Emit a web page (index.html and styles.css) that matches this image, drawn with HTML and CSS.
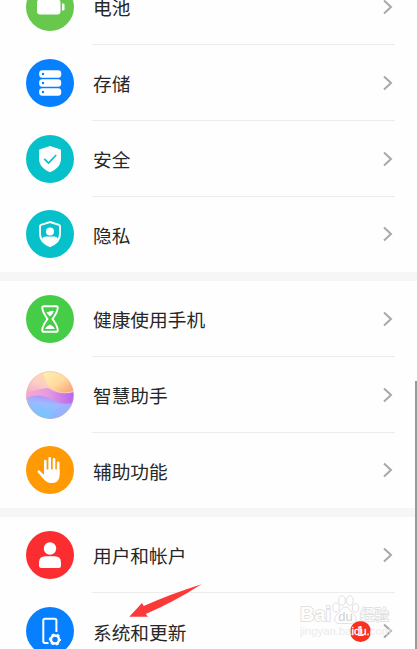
FILE: index.html
```
<!DOCTYPE html>
<html lang="zh-CN">

<head>
    <meta charset="UTF-8">
    <meta name="viewport" content="width=device-width, initial-scale=1.0">
    <title>设置</title>
    <link rel="stylesheet" href="styles.css">
</head>

<body>
    <div class="screen">
        <div class="settings">
            <div class="group">
                <div class="row">
                    <svg class="icon" viewBox="0 0 48 48">
                        <circle cx="24" cy="24" r="24" fill="#68c84e"/>
                        <rect x="11" y="16.5" width="23.5" height="15" rx="3" fill="#fff"/>
                        <path d="M36 20.5h1.2q1.3 0 1.3 1.3v4.4q0 1.3-1.3 1.3H36z" fill="#fff"/>
                    </svg>
                    <div class="content"><span class="label">电池</span><svg class="arrow" viewBox="0 0 10 16"><path d="M1 1.5 8 8 1 14.5"/></svg></div>
                </div>
                <div class="row">
                    <svg class="icon" viewBox="0 0 48 48">
                        <circle cx="24" cy="24" r="24" fill="#0680ff"/>
                        <g fill="#fff">
                            <rect x="13.2" y="11.2" width="22" height="7.6" rx="3"/>
                            <rect x="13.2" y="20.2" width="22" height="7.6" rx="3"/>
                            <rect x="13.2" y="29.2" width="22" height="7.6" rx="3"/>
                        </g>
                        <g fill="#0680ff">
                            <circle cx="17" cy="15" r="1.2"/>
                            <circle cx="17" cy="24" r="1.2"/>
                            <circle cx="17" cy="33" r="1.2"/>
                        </g>
                    </svg>
                    <div class="content"><span class="label">存储</span><svg class="arrow" viewBox="0 0 10 16"><path d="M1 1.5 8 8 1 14.5"/></svg></div>
                </div>
                <div class="row raised">
                    <svg class="icon" viewBox="0 0 48 48">
                        <circle cx="24" cy="24" r="24" fill="#06c1ca"/>
                        <path d="M24 11 34 14.2Q35 14.6 35 15.6V24C35 30.5 29.5 35 24 37.3 18.5 35 13 30.5 13 24V15.6Q13 14.6 14 14.2Z" fill="#fff"/>
                        <path d="m18.2 23.8 4.3 4.2 7.7-8" fill="none" stroke="#06c1ca" stroke-width="1.7"/>
                    </svg>
                    <div class="content"><span class="label">安全</span><svg class="arrow" viewBox="0 0 10 16"><path d="M1 1.5 8 8 1 14.5"/></svg></div>
                </div>
                <div class="row short">
                    <svg class="icon" viewBox="0 0 48 48">
                        <circle cx="24" cy="24" r="24" fill="#06c1ca"/>
                        <path d="M24 12 33 14.9Q34 15.3 34 16.2V24C34 30 29 34 24 36.2 19 34 14 30 14 24V16.2Q14 15.3 15 14.9Z" fill="none" stroke="#fff" stroke-width="2"/>
                        <circle cx="24" cy="21.5" r="4" fill="#fff"/>
                        <path d="M16.2 28.5Q17 26.5 20 26.5H28Q31 26.5 31.8 28.5 29.5 33.5 24 36 18.5 33.5 16.2 28.5Z" fill="#fff"/>
                    </svg>
                    <div class="content"><span class="label">隐私</span><svg class="arrow" viewBox="0 0 10 16"><path d="M1 1.5 8 8 1 14.5"/></svg></div>
                </div>
            </div>

            <div class="group">
                <div class="row">
                    <svg class="icon" viewBox="0 0 48 48">
                        <circle cx="24" cy="24" r="24" fill="#45cd47"/>
                        <path d="M18 11.2H30Q32 11.2 31.7 13.2C31.2 18 28.5 21 26.5 24 28.5 27 31.2 30 31.7 34.8Q32 36.8 30 36.8H18Q16 36.8 16.3 34.8C16.8 30 19.5 27 21.5 24 19.5 21 16.8 18 16.3 13.2Q16 11.2 18 11.2Z" fill="none" stroke="#fff" stroke-width="1.9"/>
                        <path d="M20 16.5q2 1.2 4-.3 2-1 4 0-1.2 2.8-4 5.3-2.8-2.3-4-5zM19.2 34q.8-2.5 4.8-4.5 4 2 4.8 4.5z" fill="#fff"/>
                    </svg>
                    <div class="content"><span class="label">健康使用手机</span><svg class="arrow" viewBox="0 0 10 16"><path d="M1 1.5 8 8 1 14.5"/></svg></div>
                </div>
                <div class="row">
                    <svg class="icon" viewBox="0 0 48 48">
                        <defs>
                            <clipPath id="ball"><circle cx="24" cy="24" r="23.7"/></clipPath>
                            <linearGradient id="pink" x1=".5" y1="0" x2=".3" y2=".6">
                                <stop offset="0" stop-color="#ffe3a6"/>
                                <stop offset=".5" stop-color="#fbcdc5"/>
                                <stop offset="1" stop-color="#f4a6c6"/>
                            </linearGradient>
                            <linearGradient id="sun" x1="0" y1="0" x2="1" y2="1">
                                <stop offset="0" stop-color="#fff0b5"/>
                                <stop offset=".5" stop-color="#ffdb9d"/>
                                <stop offset="1" stop-color="#fb9d70"/>
                            </linearGradient>
                            <linearGradient id="violet" x1="0" y1="0" x2="1" y2="0">
                                <stop offset="0" stop-color="#f5a9cf"/>
                                <stop offset=".45" stop-color="#e59bdd"/>
                                <stop offset="1" stop-color="#b565f2"/>
                            </linearGradient>
                            <linearGradient id="sea" x1=".7" y1="0" x2=".4" y2="1">
                                <stop offset="0" stop-color="#ba86fa"/>
                                <stop offset=".4" stop-color="#9cbaff"/>
                                <stop offset="1" stop-color="#69caff"/>
                            </linearGradient>
                        </defs>
                        <g clip-path="url(#ball)">
                            <path d="M0 0h48v48H0z" fill="url(#pink)"/>
                            <path d="M18 0Q18 12 25 17 34 24 48 20V0z" fill="url(#sun)"/>
                            <path d="M0 22Q12 18 22 17 34 25 48 21V36H0z" fill="url(#violet)"/>
                            <path d="M0 27Q12 22 23 27 35 35 48 32V48H0z" fill="url(#sea)"/>
                            <path d="M48 31Q31 34 22 48H48z" fill="#a4a6fa" opacity=".5"/>
                        </g>
                        <circle cx="24" cy="24" r="23.4" fill="none" stroke="#e5a5a4" stroke-opacity=".35"/>
                    </svg>
                    <div class="content"><span class="label">智慧助手</span><svg class="arrow" viewBox="0 0 10 16"><path d="M1 1.5 8 8 1 14.5"/></svg></div>
                </div>
                <div class="row short">
                    <svg class="icon" viewBox="0 0 48 48">
                        <circle cx="24" cy="24" r="24" fill="#ff9a05"/>
                        <g fill="none" stroke="#fff" stroke-width="2.6" stroke-linecap="round">
                            <path d="M19.3 27V15M23.7 26V12.3M28 26V13.3M32.2 28V16.7M12.8 25.7l6 6.3"/>
                        </g>
                        <path d="M18 23.5H33.5V29C33.5 34.5 30.5 37 26 37 21.5 37 19 35 16.5 31.5L15 29.5 18 28z" fill="#fff"/>
                    </svg>
                    <div class="content"><span class="label">辅助功能</span><svg class="arrow" viewBox="0 0 10 16"><path d="M1 1.5 8 8 1 14.5"/></svg></div>
                </div>
            </div>

            <div class="group">
                <div class="row">
                    <svg class="icon" viewBox="0 0 48 48">
                        <circle cx="24" cy="24" r="24" fill="#fb2d31"/>
                        <circle cx="24" cy="17.5" r="6.2" fill="#fff"/>
                        <path d="M13 34.5V31.5Q13 25.2 19.5 25.2H28.5Q35 25.2 35 31.5V34.5Q35 37 32.5 37H15.5Q13 37 13 34.5z" fill="#fff"/>
                    </svg>
                    <div class="content"><span class="label">用户和帐户</span><svg class="arrow" viewBox="0 0 10 16"><path d="M1 1.5 8 8 1 14.5"/></svg></div>
                </div>
                <div class="row">
                    <svg class="icon" viewBox="0 0 48 48">
                        <circle cx="24" cy="24" r="24" fill="#0680ff"/>
                        <path d="M22.5 36H19Q17.3 36 17.3 34.3V13.5Q17.3 11.8 19 11.8H28.7Q30.4 11.8 30.4 13.5V25" fill="none" stroke="#fff" stroke-width="2"/>
                        <circle cx="29" cy="32.5" r="4" fill="none" stroke="#fff" stroke-width="2.5"/>
                        <circle cx="29" cy="32.5" r="5.3" fill="none" stroke="#fff" stroke-width="1.6" stroke-dasharray="2.8 2.75" stroke-dashoffset="1.4"/>
                    </svg>
                    <div class="content"><span class="label">系统和更新</span><span class="badge">1</span><svg class="arrow" viewBox="0 0 10 16"><path d="M1 1.5 8 8 1 14.5"/></svg></div>
                </div>
            </div>
        </div>

        <div class="scrollbar"></div>

        <svg class="pointer" viewBox="0 0 74 34">
            <path d="M.3 32.7 13 19 14.7 22Q42 10 72.5.3 45 18 16.7 30L19 32.7z" fill="#fb3a38"/>
        </svg>

        <div class="watermark">
            <div class="brand">
                <span class="bai">Bai</span>
                <svg class="paw" viewBox="0 0 28 30">
                    <ellipse cx="4.5" cy="12.5" rx="3.3" ry="4.5"/>
                    <ellipse cx="10.5" cy="5.5" rx="3.3" ry="4.7"/>
                    <ellipse cx="18.3" cy="5.7" rx="3.3" ry="4.7"/>
                    <ellipse cx="24" cy="13" rx="3.2" ry="4.3"/>
                    <path d="M14 12C18 12 19 17 23 20 27 25 23 29 18 28.5H10C4 29.5 1 25 5 20 9 17 10 12 14 12z"/>
                    <text x="14" y="26">du</text>
                </svg>
                <span class="cn">经验</span>
            </div>
            <div class="site">jingyan.ba<span class="over">idu.</span>com</div>
        </div>
    </div>
</body>

</html>
```
FILE: styles.css
```
body {
    margin: 0;
    background: #fefefe;
    color: #272727;
    font-family: "Noto Sans CJK SC", sans-serif;
}

.screen {
    position: relative;
    height: 649px;
    overflow: hidden;
}

/* the list is scrolled down a little, so the first row is cut off */
.settings {
    display: flex;
    flex-direction: column;
    gap: 9px;
    margin-top: -31px;
    background: #f6f6f6;
}

.group {
    background: #fefefe;
}

.row {
    display: flex;
    align-items: center;
    gap: 18px;
    height: 76px;
    padding: 0 22px 0 26px;
}

.row.short {
    height: 75px;
}

.row.short .icon,
.row.raised .icon {
    margin-bottom: 1px;
}

.row.short .content {
    padding-bottom: 1px;
}

.icon {
    flex: none;
    width: 48px;
    height: 48px;
}

.content {
    flex: 1;
    display: flex;
    align-items: center;
    box-sizing: border-box;
    height: 100%;
    padding: 0 2px 0 1px;
    border-bottom: 1px solid #ececec;
}

.row:last-child .content {
    border-bottom: none;
}

.label {
    flex: 1;
    font-size: 18.7px;
    line-height: 27px;
}

.arrow {
    width: 10px;
    height: 16px;
    fill: none;
    stroke: #a8a8a8;
    stroke-width: 2;
}

.badge {
    width: 21px;
    height: 21px;
    margin-right: 12px;
    border-radius: 50%;
    background: #fb301f;
    color: #fff;
    font-size: 13px;
    line-height: 20px;
    text-align: center;
}

.scrollbar {
    position: absolute;
    top: 381px;
    right: 0;
    bottom: 0;
    width: 2px;
    background: #999;
}

.pointer {
    position: absolute;
    left: 129px;
    top: 584px;
    width: 74px;
    height: 34px;
}

.watermark {
    position: absolute;
    left: 300px;
    top: 594px;
    font-family: "Liberation Sans", "Noto Sans CJK SC", sans-serif;
    color: #fefefe;
}

.brand {
    display: flex;
    align-items: flex-end;
    height: 31px;
    line-height: 22px;
}

.bai {
    width: 31px;
    font-size: 20px;
    font-weight: bold;
    paint-order: stroke fill;
    -webkit-text-stroke: 1.6px #dcdcdc;
}

.paw {
    width: 29px;
    height: 30px;
    fill: #fefefe;
    stroke: #dcdcdc;
    stroke-width: 0.9;
}

.paw text {
    font-size: 13px;
    text-anchor: middle;
    stroke: none;
    fill: #d0d0d0;
}

.cn {
    font-size: 14.5px;
    line-height: 20px;
    paint-order: stroke fill;
    -webkit-text-stroke: 1.4px #dcdcdc;
}

.site {
    font-size: 11.3px;
    line-height: 13px;
    color: #ebebeb;
}

.over {
    color: #fff;
    paint-order: stroke fill;
    -webkit-text-stroke: 0.3px #ececec;
}
```
